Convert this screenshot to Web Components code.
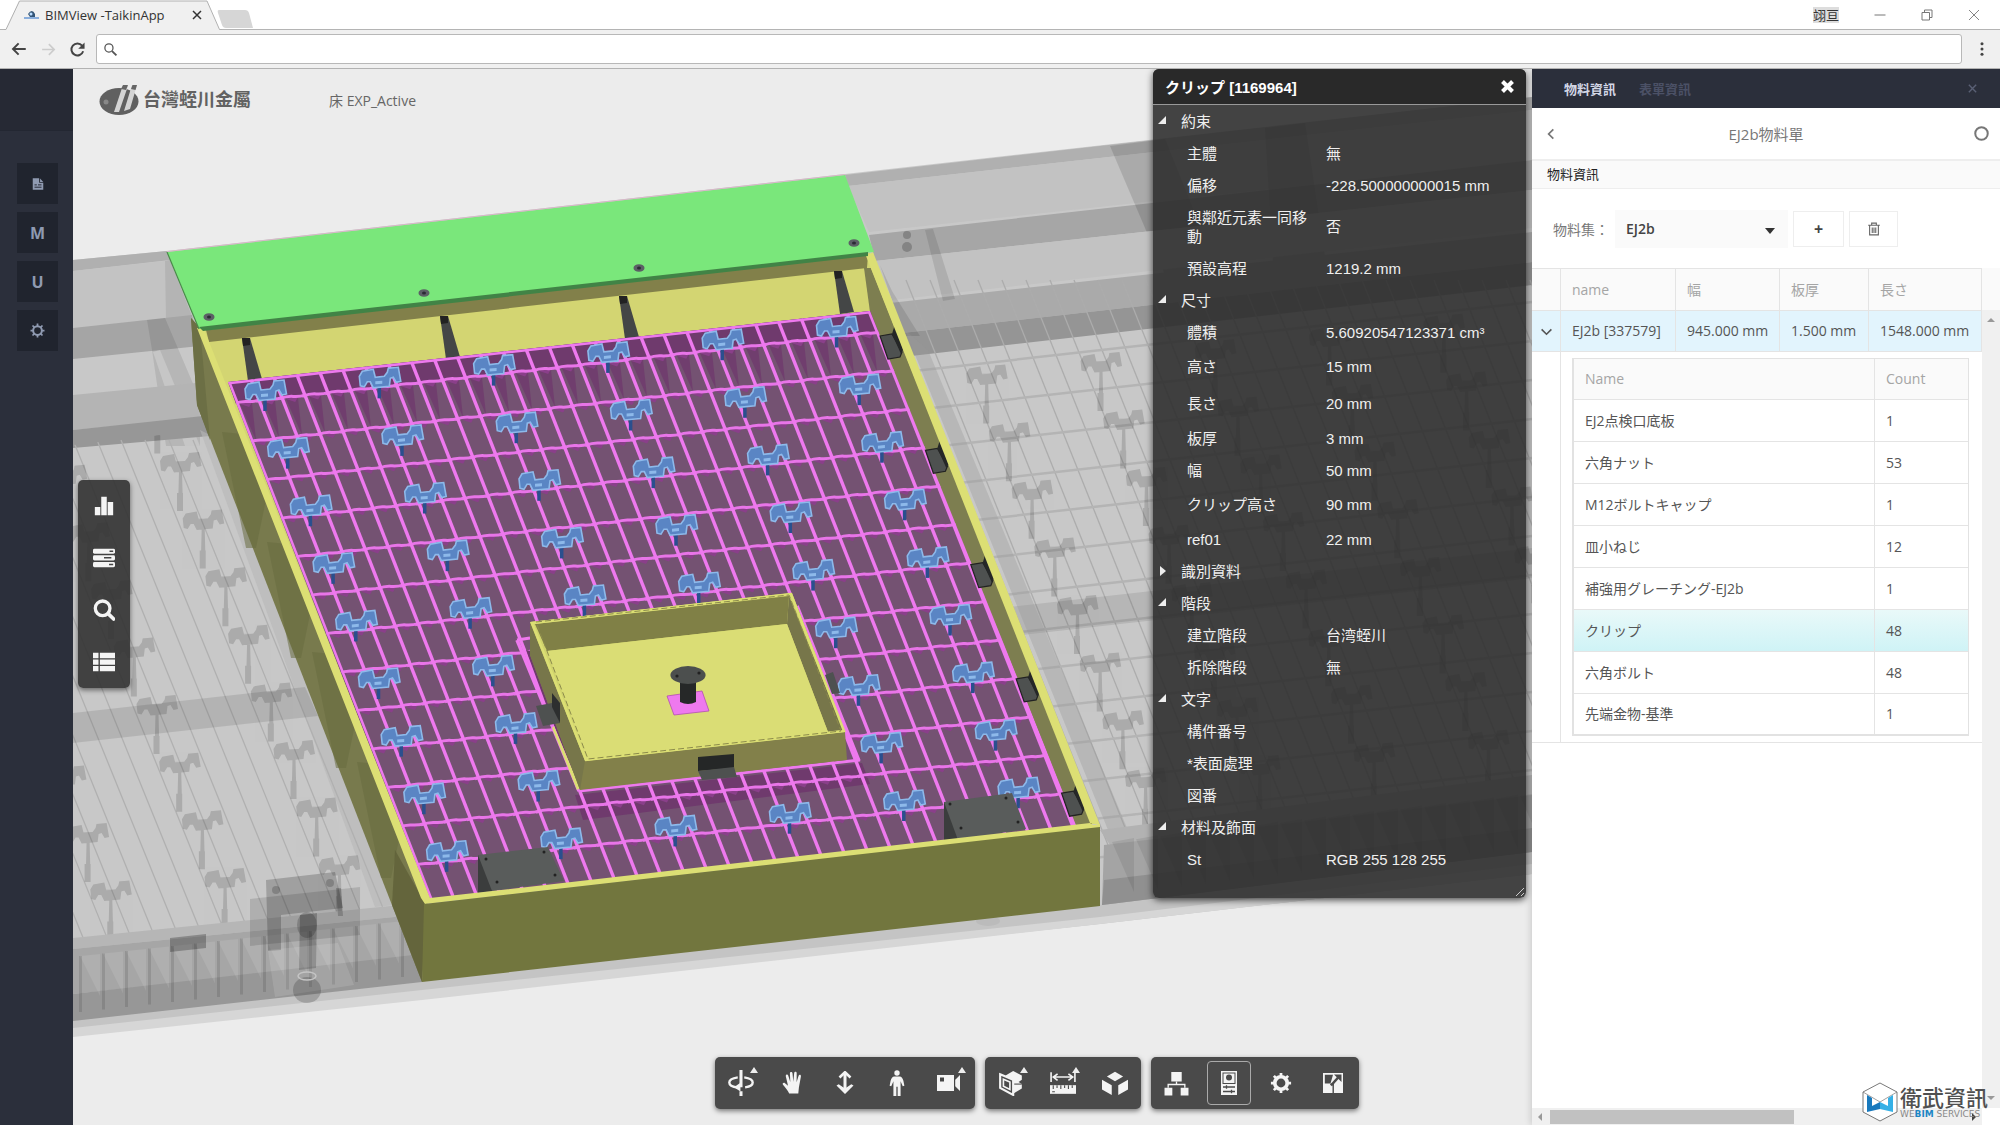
<!DOCTYPE html>
<html lang="zh-Hant">
<head>
<meta charset="utf-8">
<title>BIMView -TaikinApp</title>
<style>
html,body{margin:0;height:100%;overflow:hidden}
body{font-family:"Open Sans","Noto Sans CJK TC","Noto Sans CJK JP",sans-serif;font-size:14px;color:#555;background:#ececec}
</style>
</head>
<body>
<bim-app></bim-app>
<script>
const RESET = `*{box-sizing:border-box}button{font:inherit;color:inherit;background:none;border:0;padding:0;margin:0;display:flex;align-items:center;justify-content:center}svg{display:block}`;
function define(name, css, html, after) {
  customElements.define(name, class extends HTMLElement {
    constructor() {
      super();
      this.attachShadow({ mode: 'open' });
    }
    connectedCallback() {
      const markup = typeof html === 'function' ? html(this) : html;
      this.shadowRoot.innerHTML = `<style>${RESET}${css}</style>${markup}`;
      if (after) after(this);
    }
  });
}

/* ---------- icons ---------- */
const ICONS = {
  back: '<path d="M21 12H4M11.500 4.500L4 12l7.500 7.500" fill="none" stroke="currentColor" stroke-width="2.600"/>',
  forward: '<path d="M3 12h17M12.500 4.500L20 12l-7.500 7.500" fill="none" stroke="currentColor" stroke-width="2.400"/>',
  reload: '<path d="M20 14.500A8.500 8.500 0 1 1 18.500 6.500" fill="none" stroke="currentColor" stroke-width="2.800"/><path d="M22 2v9h-9z" fill="currentColor"/>',
  lens: '<circle cx="9.500" cy="9.500" r="6.500" fill="none" stroke="currentColor" stroke-width="2"/><path d="M14.500 14.500l7 7" stroke="currentColor" stroke-width="3"/>',
  doc: '<path d="M3 2h11v8h7v12H3z" fill="currentColor"/><path d="M15.500 2.500L21 8.500h-5.500z" fill="currentColor"/><path d="M6 13.500h4M12 13.500h6M6 17.500h12" stroke="#20242e" stroke-width="1.600"/>',
  cog: '<circle cx="12" cy="12" r="7" fill="none" stroke="currentColor" stroke-width="3.200"/><path d="M12 .8v4M12 19.200v4M.8 12h4M19.200 12h4M4 4l3 3M17 17l3 3M20 4l-3 3M4 20l3-3" stroke="currentColor" stroke-width="2.800"/>',
  bars: '<path d="M2 13h6v9H2zM9 2h6v20H9zM16 7.500h6V22h-6z" fill="currentColor"/>',
  servers: '<rect x="0" y="2" width="24" height="5.400" rx="1.600" fill="currentColor"/><rect x="0" y="9" width="24" height="5.600" rx="1.600" fill="currentColor"/><rect x="0" y="16.400" width="24" height="5.600" rx="1.600" fill="currentColor"/><path d="M18 4.700h4M12 11.800h8M17.500 19.200h4.500" stroke="#444" stroke-width="1.600"/>',
  search: '<circle cx="10.500" cy="10.200" r="8" fill="none" stroke="currentColor" stroke-width="3.600"/><path d="M16.500 16l6 5.800" stroke="currentColor" stroke-width="4" stroke-linecap="round"/>',
  list: '<path d="M0 2h6v6H0zM7.500 2H24v6H7.500zM0 9.300h6v5.600H0zM7.500 9.300H24v5.600H7.500zM0 16.300h6V22H0zM7.500 16.300H24V22H7.500z" fill="currentColor"/>',
  orbit: '<path d="M12 0v16M12 19.500V24" stroke="currentColor" stroke-width="2.800"/><path d="M9 6.800C4 7.500 1.200 9.300 1.200 11.600c0 2.400 3.300 4.200 8 4.600M15 6.800c5 .7 7.800 2.500 7.800 4.800 0 2.300-2.800 3.900-7 4.500" fill="none" stroke="currentColor" stroke-width="2.200"/><path d="M11.500 11.800v8L5.500 16z" fill="currentColor"/>',
  hand: '<path d="M8.200 22.500C7 19.800 4 16.200 2 13.800c-1-1.400.8-2.600 2-1.500l3 2.500L4.800 5.200c-.3-1.700 1.900-2.300 2.400-.6L9.300 11 8.900 2.400C8.900.6 11.300.5 11.500 2.300l.8 8.400.9-8.700c.2-1.700 2.500-1.600 2.500.2l-.1 9 2-6.400c.5-1.600 2.700-1.100 2.300.6l-2 11.100-.6 6z" fill="currentColor"/>',
  zoom: '<path d="M12 2v18" stroke="currentColor" stroke-width="3"/><path d="M6.500 6.500L12 1.200l5.500 5.300" fill="none" stroke="currentColor" stroke-width="2.600"/><path d="M3.500 14.500l8.500 8.500 8.500-8.500-2.200-1.300L12 17.500l-6.300-4.300z" fill="currentColor"/>',
  person: '<circle cx="12" cy="2.800" r="2.500" fill="currentColor"/><path d="M9.500 6h5c1.800 0 2.600 1.500 3.400 4l.9 4.500-1.500.4-2-4.500V24h-2.700v-8.500h-1.200V24H8.700V10.400l-2 4.500-1.500-.4.900-4.500c.8-2.500 1.600-4 3.400-4z" fill="currentColor"/>',
  camera: '<path d="M0 4h17v4.500h1.500L23 4v16l-4.500-4.500H17V20H0z" fill="currentColor"/><rect x="3" y="6.500" width="4" height="4" fill="#444"/><path d="M17.600 8v8" stroke="#444" stroke-width="1.200"/>',
  section: '<path d="M7 5l7-4 8 4v4l-3 2 3 2v4l-8 5-6-3z" fill="currentColor"/><path d="M2 4l12 5v14L2 16.500z" fill="#4a4a4a" stroke="currentColor" stroke-width="2"/><path d="M5 8.500l6 2.500v7L5 15z" fill="none" stroke="currentColor" stroke-width="1.500"/><path d="M15 13h7" stroke="#4a4a4a"/>',
  measure: '<path d="M1 2v9M23 2v9M3 6.500h18M7 3.500L3 6.500l4 3M17 3.500l4 3-4 3" fill="none" stroke="currentColor" stroke-width="1.500"/><path d="M0 14h24v8H0z" fill="currentColor"/><path d="M3 14v3.500M6.500 14v2.500M10 14v3.500M13.500 14v2.500M17 14v3.500M20.500 14v2.500M2 20h2.500" stroke="#4a4a4a" stroke-width="1"/>',
  explode: '<path d="M12 1.500l7.500 4.400L12 10.300 4.500 5.900z" fill="currentColor"/><path d="M0 9l9 5v9l-9-5zM24 9l-9 5v9l9-5z" fill="currentColor"/>',
  tree: '<path d="M7 1h10v9H7zM.5 16H8v7.500H.5zM16 16h7.500v7.500H16z" fill="currentColor"/><path d="M12 10v3M4 16v-3h16v3" fill="none" stroke="currentColor" stroke-width="1.300"/>',
  props: '<rect x="4" y="0" width="16" height="24" fill="currentColor"/><rect x="6" y="2" width="12" height="10.500" fill="none" stroke="#4a4a4a" stroke-width="1"/><circle cx="12" cy="6.500" r="3" fill="#4a4a4a"/><path d="M6 16h12M6 20.500h12M9.500 14.300v3.400M14.500 18.800v3.400" stroke="#4a4a4a" stroke-width="1.300"/>',
  gear: '<circle cx="12" cy="12" r="6.800" fill="none" stroke="currentColor" stroke-width="4"/><path d="M12 1v4M12 19v4M1 12h4M19 12h4M4.200 4.200l3 3M16.800 16.800l3 3M19.800 4.200l-3 3M4.200 19.800l3-3" stroke="currentColor" stroke-width="3"/>',
  full: '<path d="M2 2h20v20H2z" fill="currentColor"/><path d="M3.800 3.800H12L9.500 12.500H3.800z" fill="#4a4a4a"/><path d="M12.200 22v-8.500L9.500 13" fill="none" stroke="#4a4a4a" stroke-width="1.400"/><path d="M10 14.500l8.500-9.500" stroke="#4a4a4a" stroke-width="2.600"/><path d="M13 3.500h7.500V11z" fill="#4a4a4a"/>',
  trash: '<path d="M2 5.500h20M8 5V2h8v3M4.500 6v16h15V6M9 9.500v9.500M12 9.500v9.500M15 9.500v9.500" fill="none" stroke="currentColor" stroke-width="1.900"/>',
  left: '<path d="M16 4l-8 8 8 8" fill="none" stroke="currentColor" stroke-width="3"/>',
  down: '<path d="M3 8l9 9 9-9" fill="none" stroke="currentColor" stroke-width="3"/>',
  cross: '<path d="M4 4l16 16M20 4L4 20" stroke="currentColor" stroke-width="3"/>',
  thincross: '<path d="M2 2l20 20M22 2L2 22" stroke="currentColor" stroke-width="1.800"/>',
  fatcross: '<path d="M4 4l16 16M20 4L4 20" stroke="currentColor" stroke-width="6.500"/>',
  min: '<path d="M1 12h22" stroke="currentColor" stroke-width="2"/>',
  restore: '<path d="M2 7h15v15H2zM7 7V2h15v15h-5" fill="none" stroke="currentColor" stroke-width="2"/>',
  ring: '<circle cx="12" cy="12" r="10" fill="none" stroke="currentColor" stroke-width="3.200"/>',
  dots: '<circle cx="12" cy="3" r="2.600" fill="currentColor"/><circle cx="12" cy="12" r="2.600" fill="currentColor"/><circle cx="12" cy="21" r="2.600" fill="currentColor"/>'
};
define('bim-icon', `:host{display:block;flex:none}`, el => {
  const s = el.getAttribute('size') || 24;
  return `<svg width="${s}" height="${s}" viewBox="0 0 24 24" aria-hidden="true">${ICONS[el.getAttribute('name')]}</svg>`;
});

/* ---------- browser frame ---------- */
define('browser-frame', `
:host{display:block;flex:none;background:#f0f0f0;border-bottom:1px solid #b2b2b2}
.tabs{display:flex;height:30px;background:linear-gradient(#b4b4b4,#b4b4b4) bottom/100% 1px no-repeat,#fff}
.tab{display:grid;width:216px;margin-left:4px}
.tab>*{grid-area:1/1}
.label{display:flex;align-items:center;padding:0 19px 0 20px;gap:6px;color:#333;font-size:13px}
.label span{flex:1;white-space:nowrap}
.new{margin:7px 0 0 -3px}
.win{margin-left:auto;display:flex;align-items:center;color:#777;padding-right:20px;gap:35px}
.user{font-size:13px;line-height:16px;color:#333;background:#ddd}
.bar{display:flex;height:38px;align-items:center;padding:0 8px 0 10px}
.nav{display:flex;gap:12px;color:#444;margin-right:10px}
.nav .off{color:#ccc}
.addr{flex:1;display:flex;align-items:center;height:30px;background:#fff;border:1px solid #b8b8b8;border-radius:3px;padding-left:6px;gap:6px;color:#555}
input{flex:1;border:0;outline:0;font:inherit;background:none}
.more{color:#444;margin-left:10px;width:20px}`,
`<div class="tabs"><div class="tab"><svg width="218" height="30" viewBox="0 0 218 30"><path d="M0 30L2 29 15 1H203l12 28 2 1z" fill="#f0f0f0"/><path d="M0 29.500H2L15.500 1H203l12.500 28.500h3" fill="none" stroke="#b0b0b0"/></svg>
<div class="label"><svg width="15" height="10" viewBox="0 0 15 10"><path d="M4 4q4-6 7 0v3H6z" fill="#357"/><circle cx="7" cy="4" r="1.500" fill="#bdf"/><path d="M0 8h15" stroke="#8aaedc" stroke-width="2"/></svg><span>BIMView -TaikinApp</span><button aria-label="Close tab"><bim-icon name="cross" size="12"></bim-icon></button></div></div>
<button class="new" aria-label="New tab"><svg width="36" height="18" viewBox="0 0 36 18"><path d="M2 0h26q3 0 4 3l4 15H9q-3 0-4-3L1 3Q0 0 2 0z" fill="#d6d6d6"/></svg></button>
<div class="win"><span class="user">翊亘</span><button aria-label="Minimize"><bim-icon name="min" size="12"></bim-icon></button><button aria-label="Restore"><bim-icon name="restore" size="12"></bim-icon></button><button aria-label="Close"><bim-icon name="thincross" size="12"></bim-icon></button></div></div>
<div class="bar"><div class="nav"><button aria-label="Back"><bim-icon name="back" size="18"></bim-icon></button><button class="off" aria-label="Forward"><bim-icon name="forward" size="17"></bim-icon></button><button aria-label="Reload"><bim-icon name="reload" size="17"></bim-icon></button></div>
<label class="addr"><bim-icon name="lens" size="15"></bim-icon><input type="text" aria-label="Address"></label><button class="more" aria-label="Menu"><bim-icon name="dots" size="14"></bim-icon></button></div>`);

/* ---------- side bar ---------- */
define('side-bar', `
:host{display:flex;flex-direction:column;flex:none;width:73px;background:#2b2f3b}
.head{height:62px;background:#262934;border-bottom:1px solid #232732}
nav{display:flex;flex-direction:column;gap:8px;padding:32px 0 0 17px}
button{width:41px;height:41px;background:#20242e;color:#8f9ab1;font-weight:700;font-size:16px}`,
`<div class="head"></div><nav><button aria-label="Document"><bim-icon name="doc" size="14"></bim-icon></button><button>M</button><button>U</button><button aria-label="Settings"><bim-icon name="cog" size="15"></bim-icon></button></nav>`);

/* ---------- 3D scene ---------- */
function scene() {
  const out = [];
  const P = (pts, fill, extra = '') => out.push(`<polygon points="${pts}" fill="${fill}" ${extra}/>`);
  const L = (x1, y1, x2, y2, c, w, extra = '') => out.push(`<path d="M${x1} ${y1}L${x2} ${y2}" stroke="${c}" stroke-width="${w}" ${extra}/>`);
  const lerp = (a, b, t) => a + (b - a) * t;
  out.push(`<defs>
  <g id="clip"><path d="M0 6v12" stroke="#2a4f8e" stroke-width="3.500"/><path d="M-20-4l3-5 11-2 2 8 9-1 3-4 1-4 10-1 2.500 14-4.500 1-3-5-3 1-1 8-16 1.500-3-6h-3l-3 5-4-1z" fill="#5a85c4" stroke="#8db9ea" stroke-width="1.600"/><path d="M-4 1l7-.6v3l-7 .6z" fill="#8db9ea"/></g>
  <g id="ghost" fill="#000" opacity=".14"><path d="M-20-4l3-5 11-2 2 8 9-1 3-4 1-4 10-1 2.500 14-4.500 1-3-5-3 1-1 8-16 1.500-3-6h-3l-3 5-4-1zM-1 6h3l1 38h-5zM-3 28h6v18h-6z"/><path d="M-6-4h11v8h-11zM9-12h9v9H9z" opacity=".6"/></g>
  <clipPath id="cl"><path d="M73 445L203 430 400 905 73 940z"/></clipPath>
  <clipPath id="cr"><path d="M880 280L1532 205V835L1105 880z"/></clipPath>
  <clipPath id="cg"><path d="M228 382L870 311 1077 826 430 899z"/></clipPath></defs>`);
  // translucent neighbours, left
  P('73,260 167,251 845,174 1532,97 1532,868 1100,920 422,990 73,1028', '#c8c8c8');
  P('73,1020 422,982 1100,905 1532,852 1532,874 1100,924 422,996 73,1036', '#c4c4c4');
  P('73,1028 422,990 1100,917 1532,864 1532,874 1100,924 422,1000 73,1037', '#d6d6d6');
  P('73,260 167,251 170,260 73,271', '#b0b0b0');
  P('73,271 165,261 192,316 73,328', '#c3c3c3');
  P('165,261 170,260 192,316 166,319', '#b4b4b4');
  P('73,328 192,315 200,346 73,359', '#a5a5a5');
  P('147,320 165,318 200,400 200,446 166,446 152,350', '#000', 'opacity=".09"');
  P('160,350 200,446 185,446 153,352', '#fff', 'opacity=".22"');
  P('73,395 196,383 199,418 73,430', '#b4b4b4');
  P('73,430 203,416 210,436 73,448', '#979797');
  P('200,430 220,440 395,905 375,907', '#b8b8b8', 'opacity=".6"');
  out.push('<g clip-path="url(#cl)">');
  for (let i = -14; i < 12; i++) L(73 + i * 24, 440, 73 + i * 24 + 205, 945, '#b0b0b0', 1.3);
  for (let j = 0; j < 3; j++) for (let k = -1; k < 9; k++) out.push(`<use href="#ghost" x="${180 + 22.700 * k - 114.300 * j}" y="${465 + 57.600 * k + 12.700 * j}"/>`);
  out.push('</g>');
  P('73,713 305,687 318,716 73,743', '#000', 'opacity=".1"');
  // lower skirt, left
  P('73,938 420,903 424,914 73,949', '#b6b6b6');
  P('73,949 424,914 422,958 73,994', '#a6a6a6');
  P('73,994 422,954 422,982 73,1021', '#979797');
  for (let i = 0; i < 15; i++) {
    const x = 80 + i * 23, y = 956 - i * 2.500;
    P(`${x},${y} ${x + 20},${y + 40} ${x + 20},${y - 2}`, '#fff', 'opacity=".1"');
    P(`${x - 1},${y} ${x + 2},${y} ${x + 2},${y + 56} ${x - 1},${y + 56}`, '#000', 'opacity=".11"');
  }
  P('250,899 360,887 360,935 250,946', '#000', 'opacity=".12"');
  P('266,880 335,872 343,908 281,915 281,950 268,951', '#000', 'opacity=".2"');
  P('300,915 317,913 316,968 299,970', '#000', 'opacity=".22"');
  P('268,950 338,943 354,985 275,997', '#fff', 'opacity=".12"');
  P('170,938 206,934 206,948 170,952', '#000', 'opacity=".25"');
  out.push('<g fill="#000" opacity=".18"><ellipse cx="307" cy="990" rx="14" ry="13"/><ellipse cx="307" cy="925" rx="10" ry="13"/><circle cx="276" cy="890" r="4"/><circle cx="330" cy="883" r="4"/><path d="M336 888h5l2 28h-5z"/></g><ellipse cx="307" cy="976" rx="9" ry="4" fill="none" stroke="#c4c4c4" stroke-width="1.500"/>');
  // neighbours, right
  P('845,175 1532,97 1532,110 848,186', '#b0b0b0');
  P('848,186 1532,110 1532,160 869,232', '#c2c2c2');
  P('869,235 1532,160 1532,190 875,261', '#a6a6a6');
  P('1110,146 1165,139 1230,300 1180,310', '#000', 'opacity=".12"');
  P('1265,128 1305,123 1330,290 1275,295', '#000', 'opacity=".12"');
  P('875,261 1532,190 1532,228 892,300', '#c2c2c2');
  P('890,303 1532,232 1532,262 902,333', '#aaa');
  P('902,333 1532,262 1532,285 911,356', '#959595');
  out.push('<g fill="#000" opacity=".2"><circle cx="907" cy="235" r="4"/><circle cx="907" cy="247" r="5"/></g><path d="M925 230l8-1 22 70-12 2zM880 265l12 26 28 45h-16z" opacity=".1"/>');
  out.push('<g clip-path="url(#cr)">');
  for (let i = 0; i < 36; i++) L(690 + i * 24, 280, 690 + i * 24 + 240, 880, '#acacac', 1.3);
  for (let i = 0; i < 14; i++) L(905, 372 + i * 39, 1532, 302 + i * 39, '#b4b4b4', 2.500);
  for (let j = 0; j < 5; j++) for (let k = -8; k < 6; k++) if (570 + 12 + 57.600 * k - 12.700 * j > 300 && 57.600 * k - 12.700 * j < 200) out.push(`<use href="#ghost" x="${1077 + 22.700 * k + 114.300 * j}" y="${608 + 57.600 * k - 12.700 * j}"/>`);
  out.push('</g>');
  P('1010,607 1532,548 1532,578 1022,635', '#000', 'opacity=".09"');
  P('905,330 928,350 1130,835 1108,830', '#999', 'opacity=".35"');
  P('1100,830 1532,775 1532,800 1110,845', '#b2b2b2');
  P('1104,845 1532,795 1532,852 1102,905', '#a4a4a4');
  P('1104,880 1532,828 1532,852 1102,905', '#909090');
  for (let i = 0; i < 18; i++) P(`${1112 + i * 24},${842 - i * 2.700} ${1134 + i * 24},${892 - i * 2.700} ${1134 + i * 24},${838 - i * 2.700}`, '#000', 'opacity=".08"');
  out.push('<ellipse cx="988" cy="921" rx="12" ry="5" fill="#bbb"/>');
  // tank: outer left wall, inner floor
  P('191,318 200,328 428,905 422,982 197,405', '#787a4d');
  P('191,318 200,328 210,440 197,405', '#6c6f45');
  for (let i = 0; i < 4; i++) P(`${222 + i * 45},${432 + i * 110} ${242 + i * 45},${434 + i * 110} ${268 + i * 45},${490 + i * 110} ${256 + i * 45},${548 + i * 110} ${246 + i * 45},${548 + i * 110}`, '#686b40', 'opacity=".55"');
  P('395,850 426,905 422,982 392,905', '#5f6038', 'opacity=".8"');
  P('200,328 870,253 1095,824 428,903', '#d3d572');
  P('206,330 868,255 867,268 209,342', '#82804a');
  P('864,268 871,268 1092,824 1073,827 870,312', '#7d7e50');
  // struts
  [[242, 338], [440, 316], [619, 296], [834, 271]].forEach(([x, y]) => {
    P(`${x},${y} ${x + 8},${y} ${x + 20},${y + 41} ${x + 6},${y + 43}`, '#444646');
    P(`${x},${y} ${x + 8},${y} ${x + 8},${y + 7} ${x + 1},${y + 8}`, '#222');
  });
  // grating
  P('228,382 870,311 1074,827 429,900', '#745272');
  P('228,382 870,311 879,333 236,404', '#6f3a6d');
  out.push('<g clip-path="url(#cg)">');
  for (let i = 0; i < 28; i++) {
    const x = 240 + i * 23, y = 404 - i * 2.540;
    P(`${x},${y} ${x + 12},${y - 1} ${x + 16},${y + 36}`, '#6f3a6d', 'opacity=".8"');
  }
  P('575,795 862,763 870,784 583,820', '#6f3a6d');
  for (let r = 0; r < 14; r++) {
    const ly = 403 + r * 38.500, lx = 228 + (ly - 382) * 0.389, rx = lx + 644, ry = ly - 71;
    for (let i = 0; i < 28; i++) {
      const x = lerp(lx, rx, i / 28), y = lerp(ly, ry, i / 28);
      P(`${x + 4},${y + 1} ${x + 17},${y - 3} ${x + 13},${y + 4}`, '#8a3f8a');
      out.push(`<path d="M${x - 3} ${y + 1}q8-3 14-2.500t13-1.500" stroke="#e875e8" stroke-width="3" fill="none"/>`);
    }
  }
  for (let i = 0; i <= 28; i++) L(lerp(228, 870, i / 28), lerp(382, 311, i / 28), lerp(430, 1074, i / 28), lerp(899, 827, i / 28), '#ee79ee', i % 28 ? 3.4 : 5);
  L(228, 382, 870, 311, '#ee79ee', 5);
  out.push('</g>');
  for (let i = 0; i < 5; i++) {
    const x = 880 + i * 45.400, y = 334 + i * 114.300;
    P(`${x},${y + 2} ${x + 12},${y} ${x + 22},${y + 18} ${x + 20},${y + 23} ${x + 8},${y + 25}`, '#4e5150', 'stroke="#222" stroke-width="1.200"');
    P(`${x + 12},${y} ${x + 15},${y - 10} ${x + 23},${y + 16} ${x + 21},${y + 20}`, '#252727');
  }
  for (let c = 0; c < 6; c++) for (let r = 0; r < 9; r++) {
    if ((c === 2 || c === 3) && r > 4 && r < 8) continue;
    out.push(`<use href="#clip" x="${(265 + 114.300 * c + 22.700 * r).toFixed(1)}" y="${(393 - 12.700 * c + 57.600 * r).toFixed(1)}"/>`);
  }
  // central hatch
  P('526,650 536,652 580,790 574,780', '#6f3a6d');
  L(517, 640, 579, 791, '#ee79ee', 3.500);
  L(517, 640, 530, 638, '#ee79ee', 3);
  L(797, 606, 859, 761, '#ee79ee', 3.500);
  L(579, 791, 860, 760, '#ee79ee', 3);
  P('554,726 580,788 577,790 552,728', '#dcdf74');
  P('530,622 792,593 845,732 847,760 580,790 530,655', '#82804a');
  P('530,622 585,761 580,790 530,655', '#77764a');
  P('530,622 792,593 845,732 585,761', '#d0d36c');
  P('535,624 789,596 787,624 547,651', '#808046');
  P('789,596 843,730 828,732 787,624', '#77764a');
  P('547,651 787,624 828,732 587,759', '#dadd75');
  out.push('<path d="M532 623L791 594 844 731 586 760z" fill="none" stroke="#dcdf74" stroke-width="2.500"/><path d="M536 622L789 595 841 731 588 759z" fill="none" stroke="#8c8b4c" stroke-width="1" stroke-dasharray="6 3"/>');
  P('667,696 702,691 709,711 674,715', '#ee79ee', 'stroke="#b34fb3" stroke-width=".8"');
  out.push('<path d="M680 678h16v24q-8 4-16 0z" fill="#262828"/><ellipse cx="688" cy="675" rx="17.600" ry="9" fill="#4c4f4e"/><circle cx="677" cy="676" r="1.600" fill="#222"/><circle cx="699" cy="673" r="1.600" fill="#222"/>');
  P('698,757 734,754 734,768 698,771', '#252727');
  P('698,771 734,767 737,777 702,780', '#4e5150');
  P('536,706 552,703 560,723 543,726', '#4e5150');
  P('552,693 560,703 560,723 552,707', '#2d2f2f');
  P('825,675 833,672 840,693 832,694', '#4e5150');
  // mounting boxes
  P('944,802 1012,793 1026,829 958,840 944,840', '#595c5b');
  P('944,802 958,840 944,842', '#3b3d3d');
  P('478,855 548,847 564,881 492,891 478,892', '#595c5b');
  P('478,855 492,891 478,893', '#3b3d3d');
  out.push('<g fill="#222"><circle cx="950" cy="804" r="1.500"/><circle cx="1006" cy="798" r="1.500"/><circle cx="961" cy="828" r="1.500"/><circle cx="1018" cy="822" r="1.500"/><circle cx="486" cy="859" r="1.500"/><circle cx="544" cy="852" r="1.500"/><circle cx="497" cy="882" r="1.500"/><circle cx="555" cy="875" r="1.500"/></g>');
  // rim, front face and cover plate
  P('197,328 204,329 430,898 1090,823 1093,825 1100,824 1100,828 425,904 421,898', '#dcdf74');
  P('866,256 873,252 1100,825 1090,823', '#dcdf74');
  P('424,904 1100,827 1100,906 422,982', '#72763e');
  P('167,252 845,175 874,252 199,329', '#7ae77b');
  P('199,327 868,252 868,256 203,331', '#418346');
  L(167, 252, 199, 329, '#4a8a4a', 1.2);
  L(167, 251.500, 845, 174.500, '#d8b8c8', 1);
  [[209, 317], [424, 293], [639, 268], [854, 243]].forEach(([x, y]) => out.push(`<ellipse cx="${x}" cy="${y}" rx="5.500" ry="3.800" fill="#5c5f66"/><ellipse cx="${x}" cy="${y}" rx="2" ry="1.500" fill="#2b2b35"/>`));
  return out.join('');
}
define('model-view', `:host{display:block;min-width:0;min-height:0;background:#ececec;overflow:hidden}svg{width:1459px;height:1056px}`,
  () => `<svg viewBox="73 69 1459 1056" role="img" aria-label="3D model">${scene()}</svg>`);

/* ---------- overlays on the model ---------- */
define('view-head', `
:host{display:flex;align-items:center;gap:78px;padding:15px 0 0 26px}
.logo{display:flex;align-items:center;gap:4px;font-weight:700;font-size:18px;line-height:31px;color:#626262}
.name{color:#666}`,
`<div class="logo"><svg width="40" height="31" viewBox="0 0 40 31"><ellipse cx="20" cy="17.500" rx="19.500" ry="13.500" fill="#606060"/><path d="M15 28L24 1l5 1-9 26zM25 27L33 1h5l-7 24z" fill="#d4d4d4"/><path d="M22 5l2-4h5l-2 5zM32 5l1.500-4H38l-1.500 5z" fill="#666"/><circle cx="7" cy="18" r="2.500" fill="#888"/></svg><span>台灣蛭川金屬</span></div><span class="name">床 EXP_Active</span>`);

define('tool-button', `
:host{display:block;width:52px;height:52px;position:relative}
button{width:52px;height:52px;color:#f4f4f4}
:host([active]) button{width:44px;height:44px;margin:4px;border:1px solid #aaa;border-radius:4px}
i{position:absolute;right:9px;top:10px;border:4px solid transparent;border-top:0;border-bottom:6px solid #eee}`,
  el => `<button aria-label="${el.getAttribute('icon')}"><bim-icon name="${el.getAttribute('icon')}" size="${el.getAttribute('size') || 24}"></bim-icon></button>${el.hasAttribute('more') ? '<i></i>' : ''}`);
define('tool-group', `
:host{display:flex;background:rgba(50,50,50,.9);border-radius:5px;box-shadow:0 2px 5px rgba(0,0,0,.5)}
:host([vertical]){flex-direction:column}`, '<slot></slot>');

define('prop-row', `
:host{display:flex;align-items:center;height:32px;padding-left:34px;line-height:19px}
:host([tall]){height:37px}:host([double]){height:51px}
.k{flex:none;width:126px}.v{flex:1;margin-left:13px;white-space:nowrap}`,
  el => `<span class="k">${el.getAttribute('k')}</span><span class="v">${el.getAttribute('v') || ''}</span>`);
define('prop-section', `
:host{display:block}
button{width:100%;height:32px;justify-content:flex-start;gap:15px;padding-left:5px;line-height:19px}
svg{width:8px}`,
  el => `<button><svg width="8" height="10" viewBox="0 0 8 10"><path d="${el.hasAttribute('closed') ? 'M2 0l6 5-6 5z' : 'M8 0v8H0z'}" fill="#eee"/></svg>${el.getAttribute('label')}</button><slot></slot>`);
define('prop-panel', `
:host{display:block;width:373px;border-radius:6px;background:rgba(43,43,43,.88);color:#efefef;font:15px "Liberation Sans","Noto Sans CJK TC","Noto Sans CJK JP",sans-serif;box-shadow:0 2px 7px rgba(0,0,0,.7);padding-bottom:23px}
header{display:flex;align-items:center;justify-content:space-between;height:36px;padding:0 11px 0 12px;background:#292929;border-bottom:1px solid #999;border-radius:6px 6px 0 0;color:#fff;font-weight:700}
.grip{position:absolute;right:1px;bottom:1px}`,
`<header><span>クリップ [1169964]</span><button aria-label="Close"><bim-icon name="fatcross" size="15"></bim-icon></button></header>
<prop-section label="約束"><prop-row k="主體" v="無"></prop-row><prop-row k="偏移" v="-228.500000000015 mm"></prop-row><prop-row double k="與鄰近元素一同移動" v="否"></prop-row><prop-row k="預設高程" v="1219.2 mm"></prop-row></prop-section>
<prop-section label="尺寸"><prop-row k="體積" v="5.60920547123371 cm³"></prop-row><prop-row tall k="高さ" v="15 mm"></prop-row><prop-row tall k="長さ" v="20 mm"></prop-row><prop-row k="板厚" v="3 mm"></prop-row><prop-row k="幅" v="50 mm"></prop-row><prop-row tall k="クリップ高さ" v="90 mm"></prop-row><prop-row k="ref01" v="22 mm"></prop-row></prop-section>
<prop-section closed label="識別資料"></prop-section>
<prop-section label="階段"><prop-row k="建立階段" v="台湾蛭川"></prop-row><prop-row k="拆除階段" v="無"></prop-row></prop-section>
<prop-section label="文字"><prop-row k="構件番号"></prop-row><prop-row k="*表面處理"></prop-row><prop-row k="図番"></prop-row></prop-section>
<prop-section label="材料及飾面"><prop-row k="St" v="RGB 255 128 255"></prop-row></prop-section>
<svg class="grip" width="10" height="10" viewBox="0 0 10 10"><path d="M1 9l8-8M6 9l3-3" stroke="#ccc"/></svg>`);

/* ---------- material panel ---------- */
define('material-table', `
:host{display:grid;grid-template-columns:1fr 18px;grid-template-rows:1fr 17px;min-height:0;flex:1}
.body{overflow:hidden;min-height:0}
table{border-collapse:separate;border-spacing:0;table-layout:fixed;width:100%;font-size:14px}
th,td{height:42px;padding:0 0 0 11px;text-align:left;font-weight:400;white-space:nowrap;border-bottom:1px solid #e4e4e4;border-right:1px solid #e4e4e4;color:#555;line-height:20px}
th{color:#a5a5a5;background:#fafafa}
thead th{border-top:1px solid #e4e4e4;height:43px}
.on td{background:#e2f4fd;height:41px}
.on .x{padding-left:8px}
.sub{padding:6px 13px 6px 11px;height:auto;border-right:0}
.gut{border-right:1px solid #e4e4e4}
.inner{border:2px solid #e2e2e2;border-top-width:1px;border-right-width:1px}
.inner tr>*{height:42px;border-right:0}
.inner thead tr>*{height:41px;border-top:0}
.inner tr>*+*{border-left:1px solid #e4e4e4}
.inner tbody tr:last-child td{border-bottom:0;height:40px}
.sel td{background:linear-gradient(#e9f9f9,#cff3f6)}
.vbar{display:flex;flex-direction:column;justify-content:space-between;align-items:center;background:linear-gradient(#fafafa,#fafafa) top/100% 42px no-repeat,#f0f0f0;padding:50px 0 8px}
.vbar i,.vbar b{border:4px solid transparent}
.vbar i{border-bottom-color:#999;border-top:0}
.vbar b{border-top-color:#999;border-bottom:0}
.hbar{display:flex;align-items:center;background:#f0f0f0;padding-left:6px;gap:8px}
.hbar i,.hbar b{border:4px solid transparent}
.hbar i{border-right-color:#999;border-left:0}
.hbar b{margin-left:auto;border-left-color:#444;border-right:0;margin-right:6px}
.hbar span{width:55%;height:14px;background:#c1c1c1}`,
() => {
  const rows = [['EJ2点検口底板', 1], ['六角ナット', 53], ['M12ボルトキャップ', 1], ['皿小ねじ', 12], ['補強用グレーチング-EJ2b', 1], ['クリップ', 48], ['六角ボルト', 48], ['先端金物-基準', 1]];
  return `<div class="body"><table><colgroup><col style="width:29px"><col style="width:115px"><col style="width:104px"><col style="width:89px"><col></colgroup>
<thead><tr><th></th><th>name</th><th>幅</th><th>板厚</th><th>長さ</th></tr></thead>
<tbody><tr class="on"><td class="x"><button aria-label="Collapse"><bim-icon name="down" size="13"></bim-icon></button></td><td>EJ2b [337579]</td><td>945.000 mm</td><td>1.500 mm</td><td>1548.000 mm</td></tr>
<tr><td class="gut"></td><td class="sub" colspan="4"><table class="inner"><colgroup><col><col style="width:94px"></colgroup><thead><tr><th>Name</th><th>Count</th></tr></thead><tbody>${rows.map(r => `<tr${r[0] === 'クリップ' ? ' class="sel"' : ''}><td>${r[0]}</td><td>${r[1]}</td></tr>`).join('')}</tbody></table></td></tr></tbody></table></div>
<div class="vbar"><i></i><b></b></div><div class="hbar"><i></i><span></span><b></b></div><div></div>`;
});

define('material-panel', `
:host{display:flex;flex-direction:column;width:468px;background:#fff;min-height:0}
.tabs{display:flex;align-items:center;height:39px;flex:none;background:#2b2f3b;padding:0 22px 0 32px;gap:23px;font-size:13px;font-weight:700;color:#d3d7e6}
.tabs .off{color:#4b5166}
.tabs .x{margin-left:auto;color:#5a6075}
.title{display:flex;align-items:center;justify-content:space-between;height:53px;flex:none;padding:0 11px 0 12px;border-bottom:2px solid #eee;font-size:15px;color:#777}
.cap{height:28px;flex:none;line-height:26px;padding-left:15px;font-size:13px;color:#222;background:#fafafa;border-bottom:1px solid #eee}
.pick{display:flex;align-items:center;height:79px;flex:none;padding-left:21px;color:#777;font-size:14px}
.sel{display:grid;margin-left:6px;width:173px}
.sel>*{grid-area:1/1}
.sel svg{align-self:center;justify-self:end;margin:5px 13px 0 0;pointer-events:none}
select{appearance:none;border:0;background:#fafafa;height:38px;width:100%;padding:0 11px;font:600 14px "Open Sans",sans-serif;color:#444;outline:0}
.pick button{height:36px;border:1px solid #eee;width:51px;margin-left:5px;font-weight:700;font-size:16px;color:#444}
.pick .del{width:49px;color:#666}`,
`<div class="tabs"><button>物料資訊</button><button class="off">表單資訊</button><button class="x" aria-label="Close"><bim-icon name="cross" size="11"></bim-icon></button></div>
<div class="title"><button aria-label="Back"><bim-icon name="left" size="14"></bim-icon></button><span>EJ2b物料單</span><button aria-label="Refresh"><bim-icon name="ring" size="15"></bim-icon></button></div>
<div class="cap">物料資訊</div>
<div class="pick"><label for="set">物料集：</label><div class="sel"><select id="set"><option>EJ2b</option></select><svg width="10" height="6" viewBox="0 0 10 6"><path d="M0 0h10L5 6z" fill="#333"/></svg></div><button aria-label="Add">+</button><button class="del" aria-label="Delete"><bim-icon name="trash" size="14"></bim-icon></button></div>
<material-table></material-table>`);

define('webim-mark', `
:host{display:flex;align-items:center;gap:2px}
.zh{display:block;font-size:22px;line-height:24px;color:#505050;font-weight:500}
.en{display:block;font:9px/10px "DejaVu Sans",sans-serif;color:#888;white-space:nowrap}
b{color:#1e86c4}`,
`<svg width="36" height="40" viewBox="0 0 36 40"><path d="M18 1l17 9v20l-17 9L1 30V10z" fill="#fff" stroke="#555" stroke-width=".8"/><path d="M1 10l17 10 17-10" fill="none" stroke="#777" stroke-width=".7"/><path d="M5 13l5 3v8l8-4v7l-13 3z" fill="#1879bd"/><path d="M31 13l-5 3v8l-8-4v7l13 3z" fill="#35b0e6"/></svg><div><span class="zh">衛武資訊</span><span class="en">WE<b>BIM</b> SERVICES</span></div>`);

/* ---------- shell ---------- */
define('bim-app', `
:host{display:flex;flex-direction:column;height:100vh}
main{display:flex;flex:1;min-height:0}
.work{position:relative;flex:1;display:grid;grid-template:minmax(0,1fr)/minmax(0,1fr);min-width:0;overflow:hidden}
.work>model-view,.work>material-panel{grid-area:1/1}
material-panel{justify-self:end;position:relative;box-shadow:-2px 0 6px rgba(0,0,0,.12)}
view-head{position:absolute;left:0;top:0}
.side{position:absolute;left:5px;top:411px}
.dock{position:absolute;left:0;right:0;bottom:16px;display:flex;gap:10px;justify-content:center}
.dock tool-group{background:#4a4a4a}
prop-panel{position:absolute;right:474px;top:0}
webim-mark{position:absolute;right:12px;bottom:3px}`,
`<browser-frame></browser-frame><main><side-bar></side-bar><div class="work"><model-view></model-view><view-head></view-head>
<tool-group class="side" vertical><tool-button icon="bars" size="22"></tool-button><tool-button icon="servers" size="22"></tool-button><tool-button icon="search" size="22"></tool-button><tool-button icon="list" size="22"></tool-button></tool-group>
<prop-panel></prop-panel>
<div class="dock"><tool-group><tool-button icon="orbit" size="26" more></tool-button><tool-button icon="hand"></tool-button><tool-button icon="zoom"></tool-button><tool-button icon="person" size="26"></tool-button><tool-button icon="camera" more></tool-button></tool-group><tool-group><tool-button icon="section" size="26" more></tool-button><tool-button icon="measure" size="26" more></tool-button><tool-button icon="explode" size="26"></tool-button></tool-group><tool-group><tool-button icon="tree" size="25"></tool-button><tool-button icon="props" active></tool-button><tool-button icon="gear" size="22"></tool-button><tool-button icon="full" size="24"></tool-button></tool-group></div>
<material-panel></material-panel><webim-mark></webim-mark></div></main>`);
</script>
</body>
</html>
